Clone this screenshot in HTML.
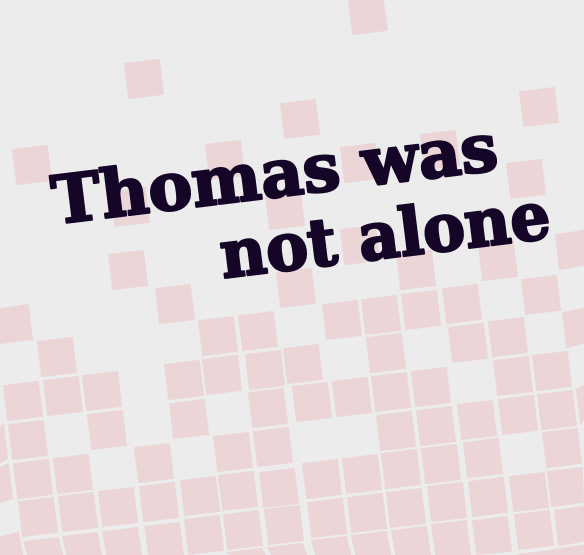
<!DOCTYPE html>
<html><head><meta charset="utf-8"><style>
html,body{margin:0;padding:0;overflow:hidden;width:584px;height:555px;background:#ececec}
svg{position:absolute;left:0;top:0;display:block}
</style></head><body>
<svg id="sv" width="584" height="555" viewBox="0 0 584 555" xmlns="http://www.w3.org/2000/svg">
<rect width="584" height="555" fill="#ececec"/>
<g id="g" fill="#ebd5d6"></g>
<g fill="#150628" stroke="#150628" stroke-width="2.5" stroke-linejoin="round" font-family="'DejaVu Serif','Liberation Serif',serif" font-weight="bold" font-size="66">
<text x="55" y="224" transform="rotate(-7 55 224)" textLength="448" lengthAdjust="spacingAndGlyphs">Thomas was</text>
<text x="223" y="278" transform="rotate(-7 223 278)" textLength="332" lengthAdjust="spacingAndGlyphs">not alone</text>
</g>
</svg>
<script>
var c=[[368,15],[144,79],[300,119],[539,107],[32,165],[225,160],[360,163],[440,150],[526,179],[130,207],[285,210],[128,270],[416,270],[498,261],[575,250],[175,304],[296,288],[541,295],[360,245],
[13,324],[218,336],[258,331],[57,357],[184,380],[222,375],[265,370],[23,401],[63,396],[102,391],[189,419],[268,408],[-12,443],[28,440],[107,430],[233,452],[273,447],[154,463],[-7,483],[33,479],[73,474],[200,496],[238,491],[279,488],[38,517],[78,512],[118,507],[159,502],[204,535],[243,530],[284,525],[3,552],[43,557],[82,552],[122,547],[164,542],[246,568],[287,563],
[342,320],[381,315],[421,310],[462,304],[582,328],[386,353],[468,343],[508,337],[303,364],[513,376],[552,371],[312,402],[352,397],[391,392],[431,387],[518,415],[557,410],[596,405],[396,431],[436,426],[477,420],[562,448],[483,458],[441,464],[401,469],[362,474],[322,479],[529,492],[567,487],[488,497],[447,502],[406,508],[367,513],[327,518],[534,530],[574,526],[492,536],[451,540],[411,546],[371,551],[331,556],[571,565],[536,570]];
var a=-7*Math.PI/180,co=Math.cos(a),si=Math.sin(a),h='';
function cl(v,m){return Math.max(0,Math.min(m,v));}
c.forEach(function(p){
 var pts=[[-18,-18],[18,-18],[18,18],[-18,18]].map(function(q){
  var x=p[0]+q[0]*co-q[1]*si,y=p[1]+q[0]*si+q[1]*co;
  return cl(x,584).toFixed(1)+','+cl(y,555).toFixed(1);});
 h+='<polygon points="'+pts.join(' ')+'"/>';
});
document.getElementById('g').innerHTML=h;
</script>
</body></html>
